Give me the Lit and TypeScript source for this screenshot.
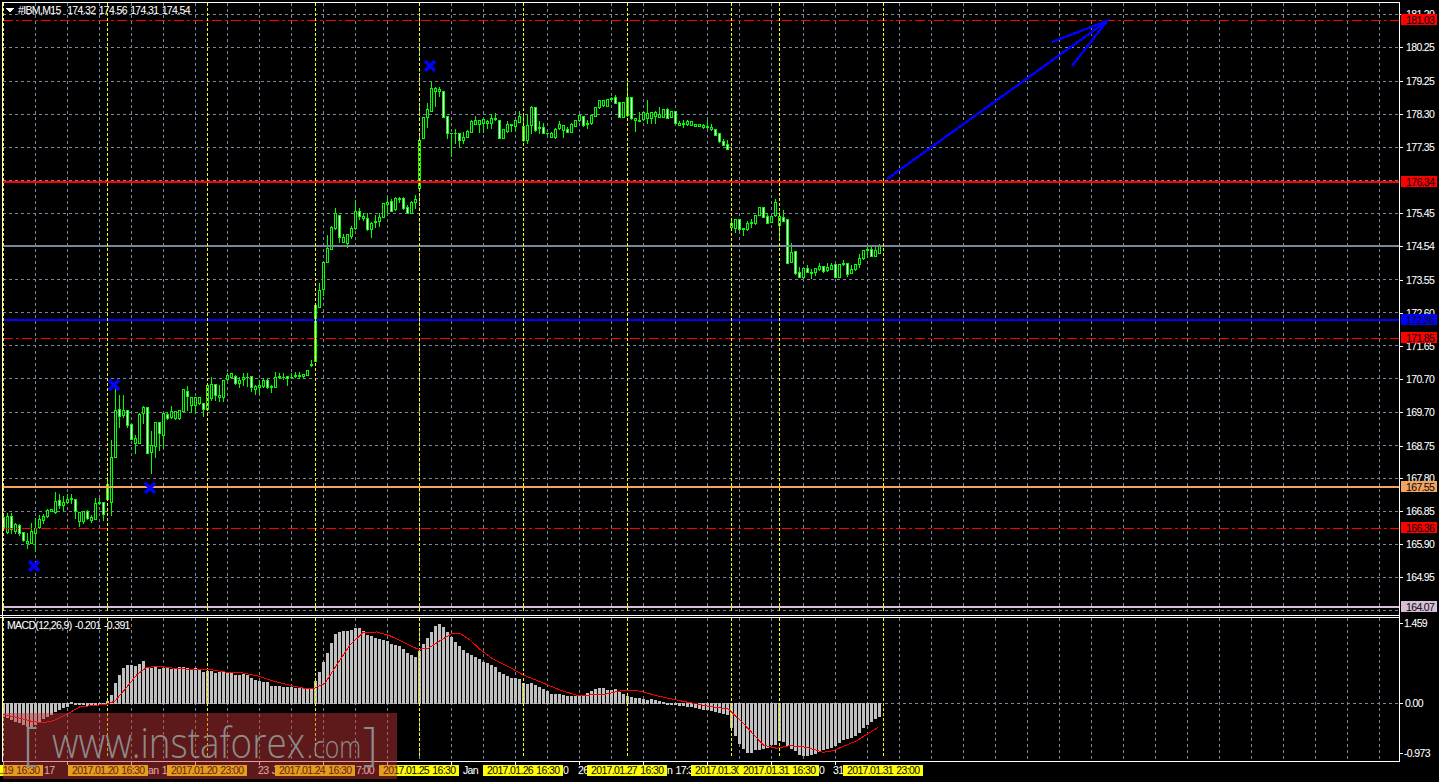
import { LitElement, html, css, svg } from "lit";
import { customElement } from "lit/decorators.js";

type Row = number[];
const toPx = (y0: number, rows: Row[]) =>
  rows.map(([bt, bb, wt = 0, wb = 0, w = 0]) => ({
    bt: Math.round(y0 + bt / 3),
    bb: Math.round(y0 + bb / 3),
    wt: Math.round(y0 + (wt || bt) / 3),
    wb: Math.round(y0 + (wb || bb) / 3),
    w,
  }));

const CANDLES = [
  ...toPx(370, [
    [440,470,430,480,1],[438,485,430,490,0],[438,478,430,490,1],[463,483,460,488,0],[466,488,462,495,1],
    [487,510,485,512,1],[514,518,490,535,0],[484,518,460,520,0],[475,488,445,542,0],[448,472,435,475,0],
    [438,450,432,458,0],[420,438,418,440,0],[418,423,0,0,0],[393,426,365,428,0],[390,405,372,415,1],
    [396,405,378,422,0],[388,396,372,398,0],[384,388,372,400,0],[388,424,0,445,1],[425,452,0,468,0],
    [422,452,0,458,0],[422,444,420,446,1],[442,449,435,456,0],[400,446,385,448,0],[396,398,385,402,0],
    [397,431,0,450,1],[342,386,320,388,1],[260,395,210,435,0],[120,260,55,262,0],[118,138,75,170,1],
    [120,135,75,140,0],[120,166,0,172,1],[162,206,0,208,1],[205,220,195,248,0],[132,218,128,220,0],
    [111,130,108,158,0],[111,248,0,250,1],[225,246,183,308,0],[156,228,0,260,0],[156,190,0,240,1],
    [128,196,0,230,0],[131,143,125,146,1],[124,142,108,145,0],[124,144,0,146,0],[120,144,0,146,0],
    [58,122,0,124,0],[64,78,48,120,1],[82,105,0,125,0],[82,105,0,130,0],[80,100,0,102,0],
    [100,116,0,137,1],[45,116,0,118,0],[42,84,20,90,0],[42,76,0,90,1],[76,82,45,92,0],
    [30,82,0,92,0],[14,28,10,30,0],[10,20,0,22,0],[18,40,15,42,1],[30,40,20,50,0],
    [21,28,8,45,0],[20,22,10,48,0],[18,50,0,62,1],[48,56,46,72,0],[45,52,30,72,0],
    [30,48,25,50,0],[30,52,28,54,1],[47,52,44,65,0],[22,50,5,52,0],[18,20,8,25,0],
    [20,22,10,28,0],[18,24,0,45,1],[20,22,10,24,0],[15,19,5,21,0],[15,17,5,25,0],
    [12,18,0,22,0],[0,14,0,16,0],
  ]),
  ...toPx(190, [
    [522,526,510,528,0],[345,512,0,514,1],[300,350,280,352,0],[216,298,0,315,0],[175,215,135,217,0],
    [112,176,108,178,0],[70,115,55,117,0],[75,140,0,155,1],
  ]),
  ...toPx(185, [
    [156,170,147,172,0],[148,175,0,185,0],[130,153,122,160,0],[77,130,45,132,0],[78,92,70,102,1],
    [94,98,85,106,0],[100,133,85,135,1],[115,133,110,155,0],[108,112,90,125,0],[97,107,85,123,0],
    [55,95,0,97,0],[52,56,35,85,0],[47,77,42,79,1],[40,73,35,75,0],[38,41,35,50,0],
    [38,68,36,73,1],[67,83,60,85,1],[52,83,47,85,0],[42,50,30,68,0],
  ]),
  ...toPx(50, [
    [270,415,0,417,0],[202,263,0,265,0],[178,200,160,230,0],[115,182,96,184,0],[115,122,112,167,0],
    [118,122,110,138,0],[124,200,122,202,1],[198,250,0,265,1],[248,250,0,318,0],[248,250,238,278,0],
    [248,270,0,288,1],[260,270,245,280,0],[243,260,241,262,0],[213,245,211,247,0],[210,221,197,223,0],
    [210,221,0,245,0],[208,220,205,245,0],[213,220,210,233,0],[205,218,192,233,0],[204,208,190,210,0],
    [210,263,0,265,1],[237,263,0,265,0],[222,243,213,245,0],[222,224,0,243,0],[210,228,0,240,0],
    [198,215,183,217,0],[228,270,193,272,1],[226,270,193,280,0],[172,225,168,250,0],[172,240,0,242,1],
    [232,235,213,250,0],[232,248,220,250,1],[248,250,0,255,0],[250,260,247,262,0],[236,262,234,264,0],
    [222,234,212,236,0],[226,240,0,262,0],[237,245,230,247,1],[222,245,220,247,0],[210,227,0,229,0],
    [195,210,193,212,0],[198,225,0,227,1],[220,222,210,233,0],[196,220,0,222,0],[172,197,0,199,0],
    [150,172,0,174,0],[150,166,0,168,0],[148,167,0,169,0],[145,147,140,149,0],[141,158,135,160,1],
    [157,200,0,202,1],[157,200,0,202,0],[142,196,96,198,1],[142,205,0,207,1],[203,211,0,242,0],
    [210,212,187,214,0],[187,208,0,210,0],[190,203,150,218,0],[187,203,0,218,0],[187,197,182,218,0],
    [193,200,170,202,0],[178,200,0,202,0],[178,203,175,205,1],[184,200,0,202,0],[184,218,0,220,1],
    [218,224,213,226,0],[220,222,210,230,0],[214,223,210,225,0],[212,224,0,226,0],[223,227,0,229,0],
    [222,227,0,229,0],[226,232,222,234,0],[229,232,210,234,0],[230,238,222,240,0],[238,254,0,256,1],
    [250,274,0,276,1],[274,284,266,286,1],[282,296,270,298,1],
  ]),
  ...toPx(170, [
    [160,170,150,180,0],[148,174,0,185,0],[148,178,0,180,1],[175,178,0,195,0],[160,178,152,180,0],
    [156,158,148,170,0],[136,160,0,162,0],[112,134,0,136,0],[112,140,0,142,1],[138,158,130,160,1],
    [138,155,0,157,0],[97,135,88,137,0],[137,165,125,205,0],[140,152,120,154,1],[148,278,0,280,1],
    [246,275,220,277,0],[244,310,0,312,1],[307,320,290,322,1],[293,322,0,324,0],[295,305,286,307,1],
    [305,308,298,325,0],[294,305,0,315,0],[288,297,280,299,0],[288,303,0,305,1],[292,300,280,302,0],
    [285,296,280,298,0],[282,320,0,322,1],[282,320,0,322,0],[280,282,270,285,0],[280,312,0,318,1],
    [298,308,284,310,0],[282,298,0,300,0],[264,282,252,290,0],[240,265,0,267,0],[238,240,232,262,0],
    [238,257,230,259,1],[240,257,226,259,0],[226,248,222,250,0],
  ]),
];

const HIST = [
  318,322,326,332,335,342,347,348,343,335,325,318,312,302,296,290,287,277,281,
  281,282,284,285,282,283,280,
  272,255,220,195,175,165,165,168,162,153,
  172,175,172,178,175,175,177,177,172,170,173,176,175,178,185,183,182,190,187,187,190,190,195,195,193,195,205,210,213,215,217,228,228,228,230,230,232,233,235,235,235,235,
  212,185,155,128,100,72,65,63,62,60,55,55,63,75,78,83,88,90,93,103,105,108,
  118,130,135,140,122,103,85,65,48,43,50,65,80,95,108,120,130,135,140,147,
  155,160,165,170,185,192,197,205,205,208,220,222,218,225,232,238,243,252,252,252,255,258,258,258,258,255,250,243,238,233,233,240,240,238,245,252,258,260,263,263,268,270,268,270,272,275,279,280,
  283,285,285,287,289,291,293,296,298,300,303,305,308,313,
  350,375,398,415,425,425,418,417,413,410,402,402,390,392,405,415,420,432,435,435,432,428,422,418,
  413,410,405,395,388,385,380,375,365,350,343,333,325,318,
];

const SIGNAL_A = [[10,313],[60,325],[100,335],[130,338],[160,332],[200,313],[240,290],[320,283],[345,273],[380,232],[410,195],[440,172],[480,169],[530,176],[640,180],[680,187],[720,187],[770,197],[820,213],[880,228],[920,236],[945,234],[975,220],[1010,165],[1050,105],[1090,67],[1130,66],[1170,77],[1210,97],[1255,118],[1285,115],[1320,92],[1355,71],[1380,70],[1410,90],[1440,118]];
const SIGNAL_B = [[40,148],[100,178],[130,195],[180,215],[240,240],[290,256],[370,254],[420,243],[470,241],[530,257],[600,272],[680,288],[745,297],[790,340],[850,405],[890,415],[930,407],[980,412],[1030,427],[1060,422],[1130,392],[1195,352]];
const SIGNAL = [
  ...SIGNAL_A.map(([x, y]) => `${(x / 3).toFixed(1)},${(610 + y / 3).toFixed(1)}`),
  ...SIGNAL_B.map(([x, y]) => `${(480 + x / 3).toFixed(1)},${(610 + y / 3).toFixed(1)}`),
].join(" ");

const GRID_Y = [14,47,81,114,147,180,213,246,279,312,345,378,412,445,478,511,544,577,610];
const GRID_X = Array.from({ length: 44 }, (_, i) => 3 + 32 * i);
const YELLOW_X = [3,107,207,315,419,523,627,731,779,883];

const PRICES: [string, number][] = [
  ["181.20",14],["180.25",47],["179.25",81],["178.30",114],["177.35",147],["175.45",213],["174.54",246],
  ["173.55",280],["172.60",313],["171.65",346],["170.70",379],["169.70",412],["168.75",446],["167.80",478],
  ["166.85",511],["165.90",544],["164.95",577],
];
const LEVELS: { v: string; y: number; box: string; line: string }[] = [
  { v: "181.03", y: 20, box: "b-red", line: "l-dd" },
  { v: "176.34", y: 182, box: "b-red", line: "l-red" },
  { v: "172.36", y: 320, box: "b-blue", line: "l-blue" },
  { v: "171.85", y: 338, box: "b-red", line: "l-dd" },
  { v: "167.55", y: 487, box: "b-sand", line: "l-sand" },
  { v: "166.36", y: 528, box: "b-red", line: "l-dd" },
  { v: "164.07", y: 607, box: "b-this", line: "l-this" },
];
const CROSSES = [[34,566],[114,385],[150,488],[430,66]];

const TIME_WHITE: [string, number][] = [
  ["17",44],["an 18",148],["23 J",258],["7:00",356],["Jan",463],["0",563],["26",578],["n 17:3",667],["0",819],["31",833],
];
const TIME_BOXES: [string, number][] = [
  ["2017.01.19 16:30",-37],["2017.01.20 16:30",68],["2017.01.20 23:00",167],["2017.01.24 16:30",275],
  ["2017.01.25 16:30",379],["2017.01.26 16:30",483],["2017.01.27 16:30",587],["2017.01.30 16:30",691],
  ["2017.01.31 16:30",739],["2017.01.31 23:00",843],
];

const candlePaths = () => {
  let green = "", white = "", black = "";
  CANDLES.forEach((c, k) => {
    const x = 3 + 4 * k;
    green += `M${x} ${c.wt}h1V${c.wb + 1}h-1Z`;
    green += `M${x - 1} ${c.bt}h3V${c.bb + 1}h-3Z`;
    const inner = `M${x} ${c.bt + 1}h1V${c.bb}h-1Z`;
    if (c.bb - c.bt >= 2) {
      if (c.w) white += inner;
      else black += inner;
    }
  });
  return { green, white, black };
};
const PATHS = candlePaths();

@customElement("app-root")
export class AppRoot extends LitElement {
  static styles = css`
    :host { display: block; width: 1439px; height: 782px; background: #000; overflow: hidden; }
    svg { display: block; }
    .crisp { shape-rendering: crispEdges; }
    .t { font-family: "Liberation Sans", Arial, sans-serif; font-size: 10.5px; letter-spacing: -0.65px; word-spacing: 1px; fill: #fff; stroke: rgba(255,255,255,0.3); stroke-width: 0.25px; white-space: pre; }
    .k { fill: #111; stroke: rgba(0,0,0,0.3); }
    .grid { stroke: #778899; stroke-width: 1; stroke-dasharray: 3 3; }
    .yellow { stroke: #ffff00; stroke-width: 1; stroke-dasharray: 3 2; }
    .frame { stroke: #fff; stroke-width: 1; fill: none; }
    .tick { stroke: #fff; stroke-width: 1; }
    .bid { stroke: #778899; stroke-width: 2; }
    .l-dd { stroke: #ff0000; stroke-width: 1; stroke-dasharray: 10 3 3 3; }
    .l-red { stroke: #ff0000; stroke-width: 2; }
    .l-blue { stroke: #0000ff; stroke-width: 2; }
    .l-sand { stroke: #f4a460; stroke-width: 2; }
    .l-this { stroke: #d8bfd8; stroke-width: 2; }
    .b-red { fill: #ff0000; }
    .b-blue { fill: #0000ff; }
    .b-sand { fill: #f4a460; }
    .b-this { fill: #d8bfd8; }
    .hist { fill: #c0c0c0; }
    .sig { stroke: #ff0000; stroke-width: 1; fill: none; shape-rendering: crispEdges; }
    .cross { stroke: #0000ff; stroke-width: 3.4; fill: none; }
    .arrow { stroke: #0000ff; stroke-width: 2.4; fill: none; shape-rendering: crispEdges; }
    .green { fill: #00ff00; }
    .white { fill: #fff; }
    .black { fill: #000; }
    .ybox { fill: #ffff00; }
    .wm { fill: rgba(196, 54, 54, 0.48); }
    .wmt { font-family: "Open Sans", "Liberation Sans", sans-serif; fill: #8c8c8c; font-weight: 300; }
    .wmb { font-size: 43px; }
    .wmc { font-size: 31px; }
    .wmk { font-size: 46px; }
  `;

  render() {
    return html`<svg width="1439" height="782" viewBox="0 0 1439 782" xmlns="http://www.w3.org/2000/svg">
      <g class="crisp">
        ${GRID_Y.map((y) => svg`<line class="grid" x1="3" x2="1399" y1=${y + 0.5} y2=${y + 0.5}></line>`)}
        ${GRID_X.slice(1).map((x) => svg`
          <line class="grid" x1=${x + 0.5} x2=${x + 0.5} y1="3" y2="612"></line>
          <line class="grid" x1=${x + 0.5} x2=${x + 0.5} y1="618" y2="761"></line>`)}
        <line class="grid" x1="3" x2="1399" y1="703.5" y2="703.5"></line>

        ${HIST.map((v, k) => {
          const yz = Math.round(610 + v / 3);
          const y = Math.min(yz, 703);
          const h = Math.max(Math.abs(yz - 703), 1);
          return svg`<rect class="hist" x=${2 + 4 * k} y=${y} width="3" height=${h + 1}></rect>`;
        })}
        <path class="green" d=${PATHS.green}></path>
        <path class="white" d=${PATHS.white}></path>
        <path class="black" d=${PATHS.black}></path>

        <line class="bid" x1="3" x2="1399" y1="246" y2="246"></line>
        ${LEVELS.map((l) => {
          const y = l.line === "l-dd" ? l.y + 0.5 : l.y;
          return svg`<line class=${l.line} x1="3" x2="1399" y1=${y} y2=${y}></line>`;
        })}
        ${YELLOW_X.map((x) => svg`
          <line class="yellow" x1=${x + 0.5} x2=${x + 0.5} y1="3" y2="612"></line>
          <line class="yellow" x1=${x + 0.5} x2=${x + 0.5} y1="618" y2="758"></line>`)}

        <line class="frame" x1="2" x2="1400" y1="2.5" y2="2.5"></line>
        <line class="frame" x1="2.5" x2="2.5" y1="2" y2="761"></line>
        <line class="frame" x1="1399.5" x2="1399.5" y1="2" y2="762"></line>
        <line class="frame" x1="0" x2="1400" y1="615.5" y2="615.5"></line>
        <line class="frame" x1="0" x2="1400" y1="617.5" y2="617.5"></line>
        <line class="frame" x1="2" x2="1400" y1="761.5" y2="761.5"></line>

        ${PRICES.map(([, y]) => svg`<line class="tick" x1="1400" x2="1403" y1=${y + 0.5} y2=${y + 0.5}></line>`)}
        ${[623, 703, 753].map((y) => svg`<line class="tick" x1="1400" x2="1403" y1=${y + 0.5} y2=${y + 0.5}></line>`)}
        ${Array.from({ length: 14 }, (_, i) => 3 + 64 * i).map((x) => svg`<line class="tick" x1=${x + 0.5} x2=${x + 0.5} y1="762" y2="765"></line>`)}
      </g>

      <polyline class="sig" points=${SIGNAL}></polyline>

      <g class="crisp">
        <path d="M6 8h8l-4 4.5z" class="white"></path>
      </g>
      ${CROSSES.map(([x, y]) => svg`<path class="cross" d="M${x - 5} ${y - 5}L${x + 5} ${y + 5}M${x + 5} ${y - 5}L${x - 5} ${y + 5}"></path>`)}
      <path class="arrow" d="M887 179L1107 21M1052 42L1107 21L1072 66"></path>

      <text class="t" x="18" y="14">#IBM,M15  174.32 174.56 174.31 174.54</text>
      <text class="t" x="7" y="629">MACD(12,26,9) -0.201 -0.391</text>

      ${PRICES.map(([p, y]) => svg`<text class="t" x="1406" y=${y + 4}>${p}</text>`)}
      <text class="t" x="1404" y="627">1.459</text>
      <text class="t" x="1405" y="707">0.00</text>
      <text class="t" x="1404" y="757">-0.973</text>

      <g>
        ${LEVELS.map((l) => svg`
          <rect class="crisp ${l.box}" x="1401" y=${l.y - 6} width="36" height="11"></rect>
          <text class="t k" x="1406" y=${l.y + 4}>${l.v}</text>`)}
      </g>

      ${TIME_WHITE.map(([s, x]) => svg`<text class="t" x=${x} y="774">${s}</text>`)}
      ${TIME_BOXES.map(([s, x]) => svg`
        <rect class="ybox crisp" x=${x} y="765" width="80" height="11"></rect>
        <text class="t k" x=${x + 4} y="774">${s}</text>`)}

      <rect class="wm crisp" x="3" y="713" width="394" height="66"></rect>
      <text class="wmt wmk" x="23" y="760">[</text>
      <text class="wmt wmb" x="52" y="758" textLength="253" lengthAdjust="spacingAndGlyphs">www.instaforex</text>
      <text class="wmt wmc" x="307" y="758" textLength="54" lengthAdjust="spacingAndGlyphs">.com</text>
      <text class="wmt wmk" x="363" y="760">]</text>
    </svg>`;
  }
}
